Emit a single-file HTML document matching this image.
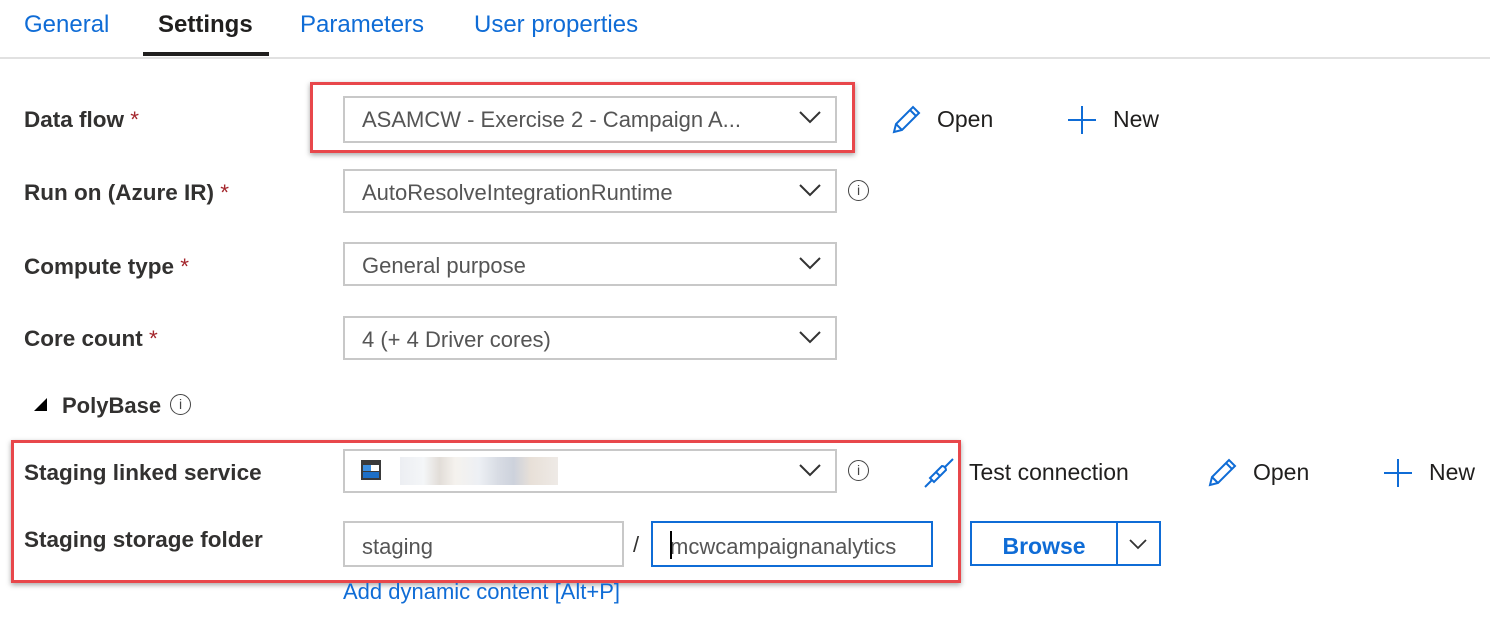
<!DOCTYPE html>
<html><head><meta charset="utf-8"><style>
*{box-sizing:border-box;margin:0;padding:0}
body{width:1490px;height:622px;background:#fff;position:relative;overflow:hidden;font-family:"Liberation Sans",sans-serif;color:#323130}
.a{position:absolute;white-space:nowrap}
.tab{font-size:24px;color:#0f6cd6;top:11px}
.lbl{font-size:22.5px;font-weight:bold;color:#323130;left:24px}
.req{color:#a4262c;font-weight:normal}
.dd{position:absolute;left:343px;width:494px;height:44px;border:2px solid #c8c8c8;font-size:22px;color:#555;padding:9px 0 0 17px}
.chev{position:absolute;right:14px;top:12px}
.info{position:absolute;width:21px;height:21px;border:1.5px solid #444;border-radius:50%;font-size:14px;text-align:center;line-height:18px;color:#444}
.red{position:absolute;border:3px solid #e8474b;box-shadow:0 2px 5px rgba(0,0,0,.35)}
.txt{font-size:23px;color:#201f1e}
</style></head><body>
<div class="a tab" style="left:24px">General</div>
<div class="a tab" style="left:158px;color:#201f1e;font-weight:bold">Settings</div>
<div class="a tab" style="left:300px">Parameters</div>
<div class="a tab" style="left:474px">User properties</div>
<div class="a" style="left:0;top:57px;width:1490px;height:2px;background:#e1e1e1"></div>
<div class="a" style="left:143px;top:52px;width:126px;height:4px;background:#201f1e"></div>

<div class="a lbl" style="top:107px">Data flow <span class="req">*</span></div>
<div class="a lbl" style="top:180px">Run on (Azure IR) <span class="req">*</span></div>
<div class="a lbl" style="top:254px">Compute type <span class="req">*</span></div>
<div class="a lbl" style="top:326px">Core count <span class="req">*</span></div>

<div class="dd" style="top:96px;height:47px">ASAMCW - Exercise 2 - Campaign A...<svg class="chev" width="22" height="14" viewBox="0 0 22 14"><path d="M1 2 L11 12 L21 2" fill="none" stroke="#333" stroke-width="2"/></svg></div>
<div class="dd" style="top:169px">AutoResolveIntegrationRuntime<svg class="chev" width="22" height="14" viewBox="0 0 22 14"><path d="M1 2 L11 12 L21 2" fill="none" stroke="#333" stroke-width="2"/></svg></div>
<div class="info" style="left:848px;top:180px">i</div>
<div class="dd" style="top:242px">General purpose<svg class="chev" width="22" height="14" viewBox="0 0 22 14"><path d="M1 2 L11 12 L21 2" fill="none" stroke="#333" stroke-width="2"/></svg></div>
<div class="dd" style="top:316px">4 (+ 4 Driver cores)<svg class="chev" width="22" height="14" viewBox="0 0 22 14"><path d="M1 2 L11 12 L21 2" fill="none" stroke="#333" stroke-width="2"/></svg></div>

<svg class="a" style="left:890px;top:104px" width="32" height="32" viewBox="0 0 32 32"><path d="M4 28 L6 20 L23 3 L29 9 L12 26 Z M6 20 L12 26 M20 6 L26 12" fill="none" stroke="#0f6cd6" stroke-width="2"/></svg>
<div class="a txt" style="left:937px;top:106px">Open</div>
<svg class="a" style="left:1067px;top:105px" width="30" height="30"><path d="M15 1 V29 M1 15 H29" stroke="#0f6cd6" stroke-width="2"/></svg>
<div class="a txt" style="left:1113px;top:106px">New</div>
<div class="red" style="left:310px;top:82px;width:545px;height:71px"></div>

<svg class="a" style="left:33px;top:397px" width="15" height="15"><path d="M14 1 V14 H1 Z" fill="#000"/></svg>
<div class="a" style="left:62px;top:393px;font-size:22px;font-weight:bold">PolyBase</div>
<div class="info" style="left:170px;top:394px">i</div>

<div class="a lbl" style="top:460px">Staging linked service</div>
<div class="a lbl" style="top:527px">Staging storage folder</div>
<div class="dd" style="top:449px"><svg class="chev" width="22" height="14" viewBox="0 0 22 14"><path d="M1 2 L11 12 L21 2" fill="none" stroke="#333" stroke-width="2"/></svg></div>
<div class="a" style="left:361px;top:460px;width:20px;height:20px;background:#3a3a3a"><div style="position:absolute;left:2px;top:5px;width:8px;height:6px;background:#3c8fe0"></div><div style="position:absolute;left:2px;top:12px;width:16px;height:6px;background:#1d6fc7"></div><div style="position:absolute;left:10px;top:5px;width:8px;height:6px;background:#fff"></div></div>
<div class="a" style="left:400px;top:457px;width:158px;height:28px;background:linear-gradient(90deg,#eceef2,#f4f6f8 15%,#e2ddd8 25%,#f5f2ee 35%,#edf0f4 50%,#d8dce4 62%,#cdd2dc 72%,#e8e0d8 83%,#eeeae6)"></div>
<div class="info" style="left:848px;top:460px">i</div>
<svg class="a" style="left:923px;top:457px" width="32" height="32" viewBox="0 0 32 32"><path d="M2 30 L9 23 M9 23 L7 21 L13 15 L17 19 L11 25 Z M13 15 L19 9 A4 4 0 0 1 23 13 L17 19 M21 11 L30 2" fill="none" stroke="#0f6cd6" stroke-width="2"/></svg>
<div class="a txt" style="left:969px;top:459px">Test connection</div>
<svg class="a" style="left:1206px;top:457px" width="32" height="32" viewBox="0 0 32 32"><path d="M4 28 L6 20 L23 3 L29 9 L12 26 Z M6 20 L12 26 M20 6 L26 12" fill="none" stroke="#0f6cd6" stroke-width="2"/></svg>
<div class="a txt" style="left:1253px;top:459px">Open</div>
<svg class="a" style="left:1383px;top:458px" width="30" height="30"><path d="M15 1 V29 M1 15 H29" stroke="#0f6cd6" stroke-width="2"/></svg>
<div class="a txt" style="left:1429px;top:459px">New</div>

<div class="a" style="left:343px;top:521px;width:281px;height:46px;border:2px solid #c8c8c8;font-size:22px;color:#555;padding:11px 0 0 17px">staging</div>
<div class="a" style="left:633px;top:532px;font-size:22px">/</div>
<div class="a" style="left:651px;top:521px;width:282px;height:46px;border:2px solid #0f6cd6;font-size:22px;color:#555;padding:11px 0 0 17px;overflow:hidden">mcwcampaignanalytics<div style="position:absolute;left:17px;top:8px;width:2px;height:28px;background:#000"></div></div>
<div class="red" style="left:11px;top:440px;width:950px;height:143px"></div>

<div class="a" style="left:970px;top:521px;width:191px;height:45px;border:2px solid #0f6cd6"><div style="position:absolute;left:0;top:0;width:146px;height:41px;border-right:2px solid #0f6cd6;font-size:23px;font-weight:bold;color:#0f6cd6;text-align:center;padding-top:10px">Browse</div><svg style="position:absolute;left:156px;top:15px" width="20" height="12"><path d="M2 2 L10 10 L18 2" fill="none" stroke="#333" stroke-width="1.8"/></svg></div>
<div class="a" style="left:343px;top:579px;font-size:22px;color:#0f6cd6">Add dynamic content [Alt+P]</div>
</body></html>
